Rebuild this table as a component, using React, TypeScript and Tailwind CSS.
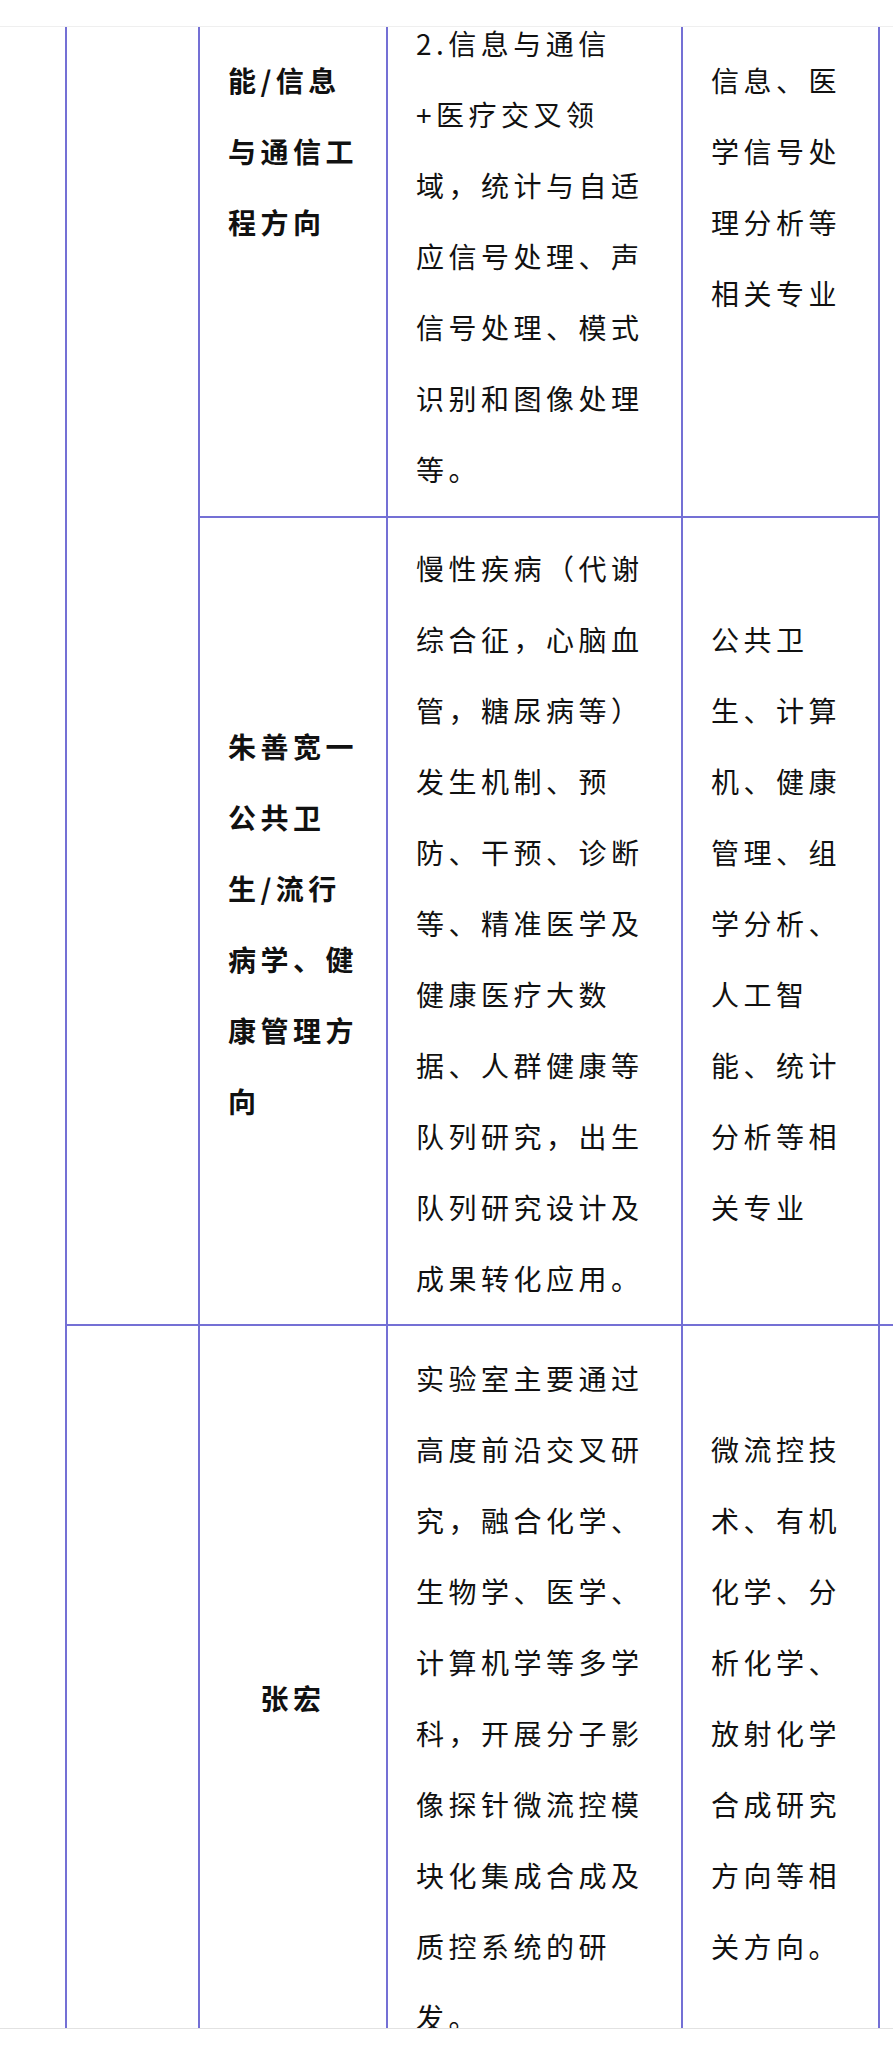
const line = "border-l-2 border-t-2 border-[#7470d5]";
const txt = "text-[28px] leading-[71px] tracking-[4.5px] text-[#111]";

function Cell({ className = "", children }: { className?: string; children?: React.ReactNode }) {
  return <div className={`${line} ${className}`}>{children}</div>;
}

export default function App() {
  return (
    <div
      className="w-[893px] h-[2050px] bg-white overflow-hidden"
      style={{ fontFamily: '"Noto Sans CJK SC", "Noto Sans", sans-serif' }}
    >
      {/* top bar */}
      <div className="h-[27px] border-b border-[#efefef] bg-white" />

      <div className="h-[2001px] overflow-hidden">
        <div className="-mt-[40px] ml-[65px] grid w-[1013px] grid-cols-[133px_188px_295px_197px_200px] grid-rows-[529px_auto_741px]">
          {/* group 1 */}
          <Cell className="row-span-2" />
          <Cell className={`${txt} font-bold pl-[28px] pr-[20px] pt-[56px]`}>
            能/信息与通信工程方向
          </Cell>
          <Cell className={`${txt} px-[28px] pt-[19px]`}>
            2.信息与通信+医疗交叉领域，统计与自适应信号处理、声信号处理、模式识别和图像处理等。
          </Cell>
          <Cell className={`${txt} px-[28px] pt-[56px]`}>信息、医学信号处理分析等相关专业</Cell>
          <Cell className="row-span-2" />

          <Cell className={`${txt} font-bold pl-[28px] pr-[20px] pt-[15px] pb-[10px] flex flex-col justify-center`}>
            <p>朱善宽一公共卫生/流行病学、健康管理方向</p>
          </Cell>
          <Cell className={`${txt} px-[28px] pt-[15px] pb-[10px] flex flex-col justify-center`}>
            <p>
              慢性疾病（代谢综合征，心脑血管，糖尿病等）发生机制、预防、干预、诊断等、精准医学及健康医疗大数据、人群健康等队列研究，出生队列研究设计及成果转化应用。
            </p>
          </Cell>
          <Cell className={`${txt} px-[28px] pt-[15px] pb-[10px] flex flex-col justify-center`}>
            <p>公共卫生、计算机、健康管理、组学分析、人工智能、统计分析等相关专业</p>
          </Cell>

          {/* group 2 */}
          <Cell />
          <Cell className={`${txt} font-bold px-[20px] pt-[15px] pb-[10px] flex flex-col justify-center text-center`}>
            <p>张宏</p>
          </Cell>
          <Cell className={`${txt} px-[28px] pt-[15px] pb-[10px] flex flex-col justify-center`}>
            <p>
              实验室主要通过高度前沿交叉研究，融合化学、生物学、医学、计算机学等多学科，开展分子影像探针微流控模块化集成合成及质控系统的研发。
            </p>
          </Cell>
          <Cell className={`${txt} px-[28px] pt-[15px] pb-[10px] flex flex-col justify-center`}>
            <p>微流控技术、有机化学、分析化学、放射化学合成研究方向等相关方向。</p>
          </Cell>
          <Cell />
        </div>
      </div>

      {/* bottom bar */}
      <div className="h-[22px] border-t border-[#e2e2e2] bg-white" />
    </div>
  );
}
